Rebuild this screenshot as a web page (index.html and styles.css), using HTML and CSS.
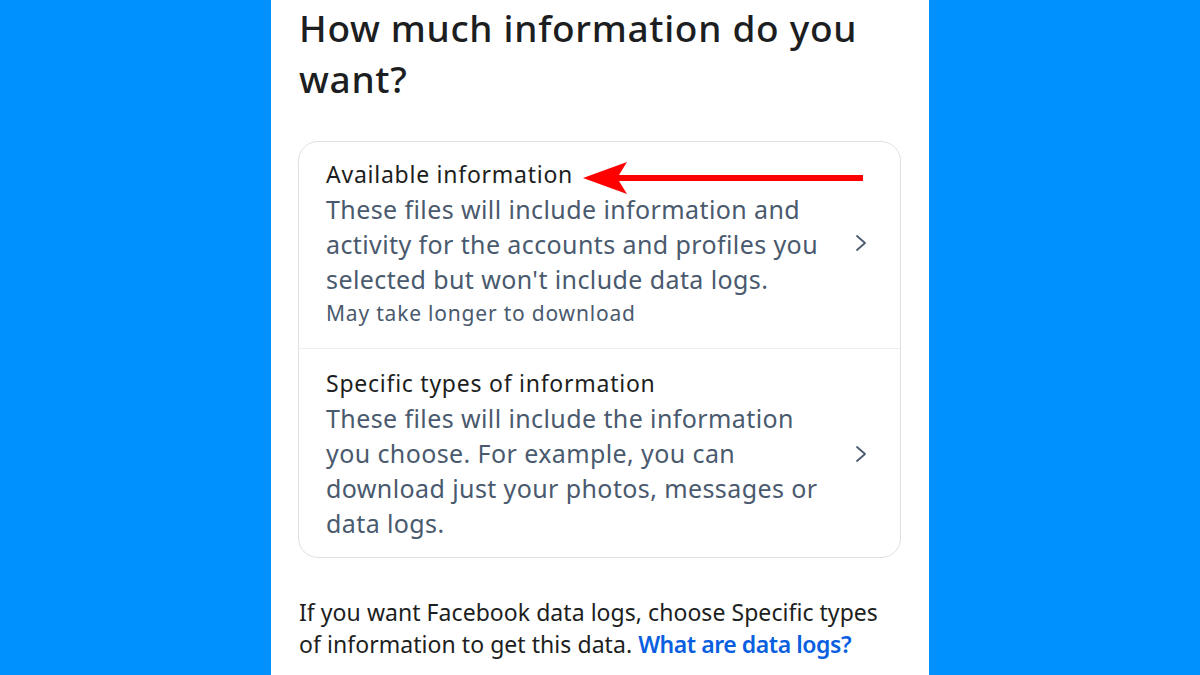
FILE: index.html
```html
<!DOCTYPE html>
<html>
<head>
<meta charset="utf-8">
<link rel="stylesheet" href="styles.css">
</head>
<body>
<div class="panel">
  <h1 class="title">How much information do you want?</h1>
  <div class="card">
    <div class="row">
      <div class="row-text">
        <div class="row-title">Available information</div>
        <div class="row-desc">These files will include information and activity for the accounts and profiles you selected but won't include data logs.</div>
        <div class="row-meta">May take longer to download</div>
      </div>
      <svg class="chev" width="14" height="18" viewBox="0 0 14 18"><path d="M3 2 L11 9 L3 16" fill="none" stroke="#4a5a6e" stroke-width="1.8" stroke-linecap="round" stroke-linejoin="round"/></svg>
    </div>
    <div class="row second">
      <div class="row-text">
        <div class="row-title">Specific types of information</div>
        <div class="row-desc">These files will include the information you choose. For example, you can download just your photos, messages or data logs.</div>
      </div>
      <svg class="chev" width="14" height="18" viewBox="0 0 14 18"><path d="M3 2 L11 9 L3 16" fill="none" stroke="#4a5a6e" stroke-width="1.8" stroke-linecap="round" stroke-linejoin="round"/></svg>
    </div>
  </div>
  <p class="footer">If you want Facebook data logs, choose Specific types of information to get this data. <a class="link">What are data logs?</a></p>
  <svg class="arrow" width="290" height="40" viewBox="0 0 290 40"><path d="M0 18 L44 2 L36 15 L280 15 L280 21 L36 21 L44 34 Z" fill="#ff0000"/></svg>
</div>
</body>
</html>
```
FILE: styles.css
```css
html, body {
  margin: 0;
  padding: 0;
}
body {
  background: #0091ff;
  font-family: "Noto Sans", "Liberation Sans", sans-serif;
  height: 675px;
  overflow: hidden;
}
.panel {
  position: relative;
  width: 658px;
  height: 675px;
  margin: 0 auto;
  background: #ffffff;
  box-sizing: border-box;
  padding: 0 28px 0 27px;
}
.title {
  margin: 0;
  padding: 2px 0 0 1px;
  font-size: 37px;
  line-height: 51px;
  font-weight: 500;
  color: #1c1e21;
  letter-spacing: 0.7px;
}
.card {
  margin-top: 37px;
  border: 1.5px solid #dde1e6;
  border-radius: 20px;
}
.row {
  display: flex;
  align-items: center;
  padding: 15px 32px 19px 27px;
}
.row.second {
  border-top: 1px solid #eceef1;
  padding: 17px 32px 16px 27px;
}
.row-text {
  flex: 1;
  padding-right: 20px;
}
.row-title {
  font-size: 23px;
  line-height: 34px;
  letter-spacing: 0.75px;
  color: #1c1e21;
}
.row-desc {
  margin-top: 1px;
  font-size: 25px;
  line-height: 35px;
  letter-spacing: 0.4px;
  color: #4a5a6e;
}
.row-meta {
  font-size: 21px;
  line-height: 32px;
  letter-spacing: 0.8px;
  color: #4a5a6e;
}
.chev {
  flex: none;
}
.footer {
  margin: 38px 0 0 1px;
  font-size: 23px;
  line-height: 32px;
  letter-spacing: 0.05px;
  color: #1c1e21;
}
.link {
  color: #0a5fe0;
  font-weight: 600;
  letter-spacing: -0.45px;
}
.arrow {
  position: absolute;
  left: 312px;
  top: 160px;
}
```
